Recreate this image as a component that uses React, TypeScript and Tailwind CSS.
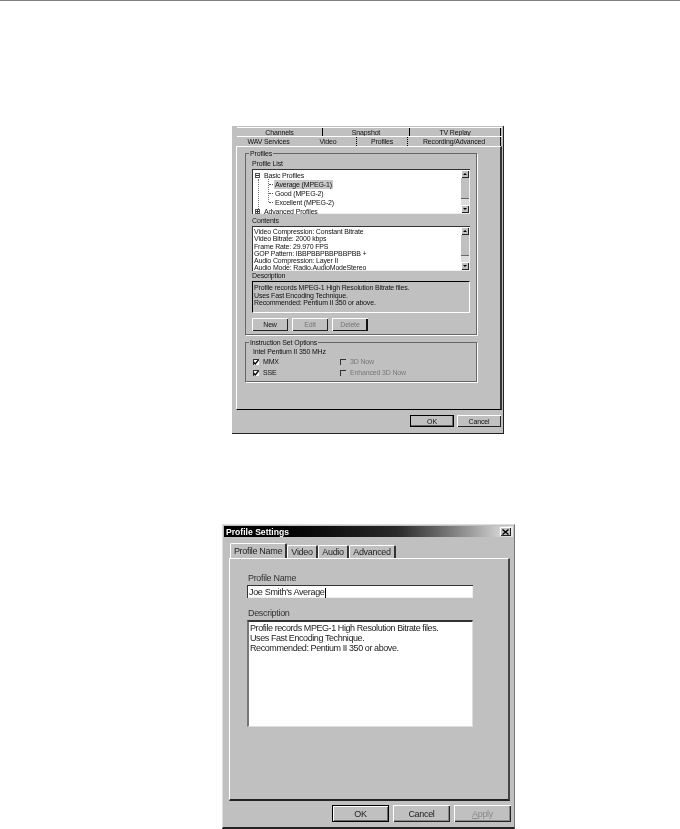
const FONT = "font-['Liberation_Sans',Arial,sans-serif]";
const RAISED = "shadow-[inset_1px_1px_0_#fff,inset_-1px_-1px_0_#222]";
const SUNKEN = "shadow-[inset_1px_1px_0_#333,inset_-1px_-1px_0_#eee]";

function ScrollBar() {
  return (
    <div className="w-[8px] h-full flex flex-col bg-[#c0c0c0]">
      <div className={`h-[8px] flex items-center justify-center ${RAISED}`}>
        <span className="block w-0 h-0 border-x-[2px] border-x-transparent border-b-[2px] border-b-black" />
      </div>
      <div className="flex-1 border-b border-[#666]" />
      <div className="h-[6px] bg-[#ddd]" />
      <div className={`h-[8px] flex items-center justify-center ${RAISED}`}>
        <span className="block w-0 h-0 border-x-[2px] border-x-transparent border-t-[2px] border-t-black" />
      </div>
    </div>
  );
}

function SmallTab({ label, w, active, plain }: { label: string; w: string; active?: boolean; plain?: boolean }) {
  return (
    <div className={`${w} h-full flex items-center justify-center ${plain ? "" : active ? "border-r border-dotted border-black" : "border-r border-black"}`}>
      {label}
    </div>
  );
}

function Check({ on, dim, label }: { on?: boolean; dim?: boolean; label: string }) {
  return (
    <div className={`flex items-center gap-[4px] h-[11px] ${dim ? "text-[#777]" : ""}`}>
      <div className={`w-[6px] h-[6px] flex items-center justify-center ${on ? "bg-white" : "bg-[#c0c0c0]"} shadow-[inset_1px_1px_0_#333]`}>
        {on && (
          <svg width="6" height="6" viewBox="0 0 6 6">
            <path d="M0.5 3 L2.2 5 L5.5 1" fill="none" stroke="#000" strokeWidth="1.3" />
          </svg>
        )}
      </div>
      <span>{label}</span>
    </div>
  );
}

function SmallButton({ label, dim, edge }: { label: string; dim?: boolean; edge?: boolean }) {
  return (
    <div className={`w-[36px] h-[13px] flex items-center justify-center bg-[#c0c0c0] ${edge ? "shadow-[inset_1px_1px_0_#fff,inset_-2px_-1px_0_#111]" : RAISED} ${dim ? "text-[#777]" : ""}`}>
      {label}
    </div>
  );
}

function GuideRow({ label, selected }: { label: string; selected?: boolean }) {
  return (
    <div className="flex items-center h-[9px] pl-[14px]">
      <span className="w-[4px] border-t border-dotted border-[#555] mr-[1px]" />
      <span className={selected ? "bg-[#c8c8c8] px-[1px]" : "px-[1px]"}>{label}</span>
    </div>
  );
}

function Expander({ open }: { open?: boolean }) {
  return (
    <span className="w-[5px] h-[5px] border border-[#555] flex items-center justify-center">
      <span className="w-[3px] h-px bg-[#333]" />
      {!open && <span className="absolute w-px h-[3px] bg-[#333]" />}
    </span>
  );
}

function TopDialog() {
  return (
    <div className={`ml-[232px] mt-[125px] w-[272px] h-[308px] bg-[#c0c0c0] border-b border-r border-[#222] flex flex-col pl-[4px] pr-[1px] pt-[1px] ${FONT} text-[7px] tracking-[-0.16px] leading-[9px] text-[#111] blur-[0.3px]`}>
      <div className="ml-[1px] h-[9px] flex border-t border-[#fff]">
        <SmallTab label="Channels" w="w-[86px]" />
        <SmallTab label="Snapshot" w="w-[87px]" />
        <SmallTab label="TV Replay" w="w-[91px]" />
      </div>
      <div className="ml-[1px] h-[10px] flex border-t border-[#fff]">
        <SmallTab label="WAV Services" w="w-[63px]" plain />
        <SmallTab label="Video" w="w-[57px]" active />
        <SmallTab label="Profiles" w="w-[51px]" active />
        <SmallTab label="Recording/Advanced" w="w-[93px]" />
      </div>
      <div className="flex-none h-[264px] border-t border-l border-white border-r-2 border-r-[#333] border-b border-b-black pl-[8px] pt-[6px] pr-[23px] flex flex-col">
        <div className="relative h-[182px] border border-[#666] shadow-[1px_1px_0_#fff] px-[6px] pt-[5px] flex flex-col">
          <span className="absolute -top-[5px] left-[3px] bg-[#c0c0c0] px-[1px]">Profiles</span>
          <div className="h-[10px] leading-[10px]">Profile List</div>
          <div className={`relative h-[45px] bg-white ${SUNKEN} flex justify-between pl-[3px] pr-[1px] py-[1px]`}>
            <div className="flex flex-col pt-[1px]">
              <div className="h-[9px] flex items-center relative"><Expander open /><span className="pl-[4px]">Basic Profiles</span></div>
              <GuideRow label="Average (MPEG-1)" selected />
              <GuideRow label="Good (MPEG-2)" />
              <GuideRow label="Excellent (MPEG-2)" />
              <div className="h-[9px] flex items-center relative"><Expander /><span className="pl-[4px]">Advanced Profiles</span></div>
            </div>
            <span className="absolute left-[6px] top-[10px] h-[30px] border-l border-dotted border-[#777]" />
            <span className="absolute left-[16px] top-[10px] h-[23px] border-l border-dotted border-[#777]" />
            <ScrollBar />
          </div>
          <div className="h-[11px] leading-[12px] mt-[1px]">Contents</div>
          <div className={`h-[45px] bg-white ${SUNKEN} flex justify-between pl-[2px] pr-[1px] py-[1px]`}>
            <div className="flex flex-col leading-[7.3px] pt-[1px] whitespace-nowrap">
              <div>Video Compression: Constant Bitrate</div>
              <div>Video Bitrate: 2000 kbps</div>
              <div>Frame Rate: 29.970 FPS</div>
              <div>GOP Pattern: IBBPBBPBBPBBPBB +</div>
              <div>Audio Compression: Layer II</div>
              <div>Audio Mode: Radio.AudioModeStereo</div>
            </div>
            <ScrollBar />
          </div>
          <div className="h-[10px] leading-[10px]">Description</div>
          <div className="h-[32px] border-t border-l border-black border-r border-b border-r-white border-b-white pl-[1px] pt-[2px] leading-[7.5px] whitespace-nowrap">
            <div>Profile records MPEG-1 High Resolution Bitrate files.</div>
            <div>Uses Fast Encoding Technique.</div>
            <div>Recommended: Pentium II 350 or above.</div>
          </div>
          <div className="flex gap-[4px] mt-[5px]">
            <SmallButton label="New" />
            <SmallButton label="Edit" dim />
            <SmallButton label="Delete" dim edge />
          </div>
        </div>
        <div className="relative mt-[7px] h-[40px] border border-[#666] shadow-[1px_1px_0_#fff] pl-[7px] pt-[4px] flex flex-col">
          <span className="absolute -top-[5px] left-[3px] bg-[#c0c0c0] px-[1px]">Instruction Set Options</span>
          <div className="h-[9px] leading-[10px]">Intel Pentium II 350 MHz</div>
          <div className="flex">
            <div className="w-[87px] flex flex-col">
              <Check on label="MMX" />
              <Check on label="SSE" />
            </div>
            <div className="flex flex-col">
              <Check dim label="3D Now" />
              <Check dim label="Enhanced 3D Now" />
            </div>
          </div>
        </div>
      </div>
      <div className="flex justify-end gap-[3px] mt-[5px] pr-[1px]">
        <div className="w-[44px] h-[12px] flex items-center justify-center border border-black shadow-[inset_-1px_-1px_0_#666]">OK</div>
        <div className={`w-[44px] h-[12px] flex items-center justify-center ${RAISED}`}>Cancel</div>
      </div>
    </div>
  );
}

function BigTab({ label, w, active }: { label: string; w: string; active?: boolean }) {
  return (
    <div className={`${w} flex items-center justify-center whitespace-nowrap border-t border-l border-white border-r-2 border-r-[#333] rounded-t-[2px] ${active ? "h-[15px] -mb-[1px] bg-[#c0c0c0] relative z-10" : "h-[13px] mt-[2px]"}`}>
      {label}
    </div>
  );
}

function BigButton({ label, primary, dim }: { label: React.ReactNode; primary?: boolean; dim?: boolean }) {
  const look = primary
    ? "border border-black shadow-[inset_1px_1px_0_#fff,inset_-1px_-1px_0_#666]"
    : "shadow-[inset_1px_1px_0_#fff,inset_-1px_-1px_0_#222,inset_-2px_-2px_0_#888]";
  return (
    <div className={`w-[57px] h-[17px] flex items-center justify-center ${look} ${dim ? "text-[#8a8a8a]" : ""}`}>
      {label}
    </div>
  );
}

function BottomDialog() {
  return (
    <div className={`ml-[222px] mt-[90px] w-[293px] h-[305px] bg-[#c0c0c0] border-t border-l border-[#ddd] border-b-2 border-b-[#222] border-r border-r-[#777] flex flex-col p-[1px] ${FONT} text-[9px] tracking-[-0.32px] leading-[12px] text-[#222] blur-[0.2px]`}>
      <div className="h-[11px] flex items-center justify-between bg-gradient-to-r from-black via-[#2a2a2a] via-60% to-[#e8e8e8] pl-[2px] pr-[2px]">
        <span className="text-white font-bold text-[8.6px] tracking-normal">Profile Settings</span>
        <div className={`w-[11px] h-[9px] bg-[#c0c0c0] flex items-center justify-center ${RAISED}`}>
          <svg width="7" height="6" viewBox="0 0 7 6">
            <path d="M0.5 0.5 L6.5 5.5 M6.5 0.5 L0.5 5.5" stroke="#000" strokeWidth="1.4" />
          </svg>
        </div>
      </div>
      <div className="flex pl-[6px] mt-[6px] h-[15px]">
        <BigTab label="Profile Name" w="w-[57px]" active />
        <BigTab label="Video" w="w-[31px]" />
        <BigTab label="Audio" w="w-[31px]" />
        <BigTab label="Advanced" w="w-[47px]" />
      </div>
      <div className="ml-[5px] mr-[3px] h-[243px] border-t border-l border-white border-r-2 border-r-[#444] border-b-2 border-b-[#222] pl-[17px] pt-[12px] flex flex-col">
        <div className="h-[14px] pl-[1px] leading-[14px] text-[#333]">Profile Name</div>
        <div className={`w-[226px] h-[13px] bg-white ${SUNKEN} pl-[2px] leading-[14px]`}>
          Joe Smith's Average<span className="inline-block w-px h-[10px] bg-black align-middle" />
        </div>
        <div className="h-[14px] mt-[8px] pl-[1px] leading-[14px] text-[#333]">Description</div>
        <div className="w-[226px] h-[107px] bg-white border-t-2 border-l-2 border-t-[#333] border-l-[#777] border-b border-r border-b-[#ddd] border-r-[#ddd] pl-[1px] pt-px leading-[10px] whitespace-nowrap tracking-[-0.42px]">
          <div>Profile records MPEG-1 High Resolution Bitrate files.</div>
          <div>Uses Fast Encoding Technique.</div>
          <div>Recommended: Pentium II 350 or above.</div>
        </div>
      </div>
      <div className="flex justify-end gap-[4px] mt-[4px] pr-[2px]">
        <BigButton label="OK" primary />
        <BigButton label="Cancel" />
        <BigButton label={<span><u>A</u>pply</span>} dim />
      </div>
    </div>
  );
}

export default function App() {
  return (
    <div className="w-[680px] h-[829px] bg-white overflow-hidden">
      <div className="h-px bg-[#808080]" />
      <TopDialog />
      <BottomDialog />
    </div>
  );
}
